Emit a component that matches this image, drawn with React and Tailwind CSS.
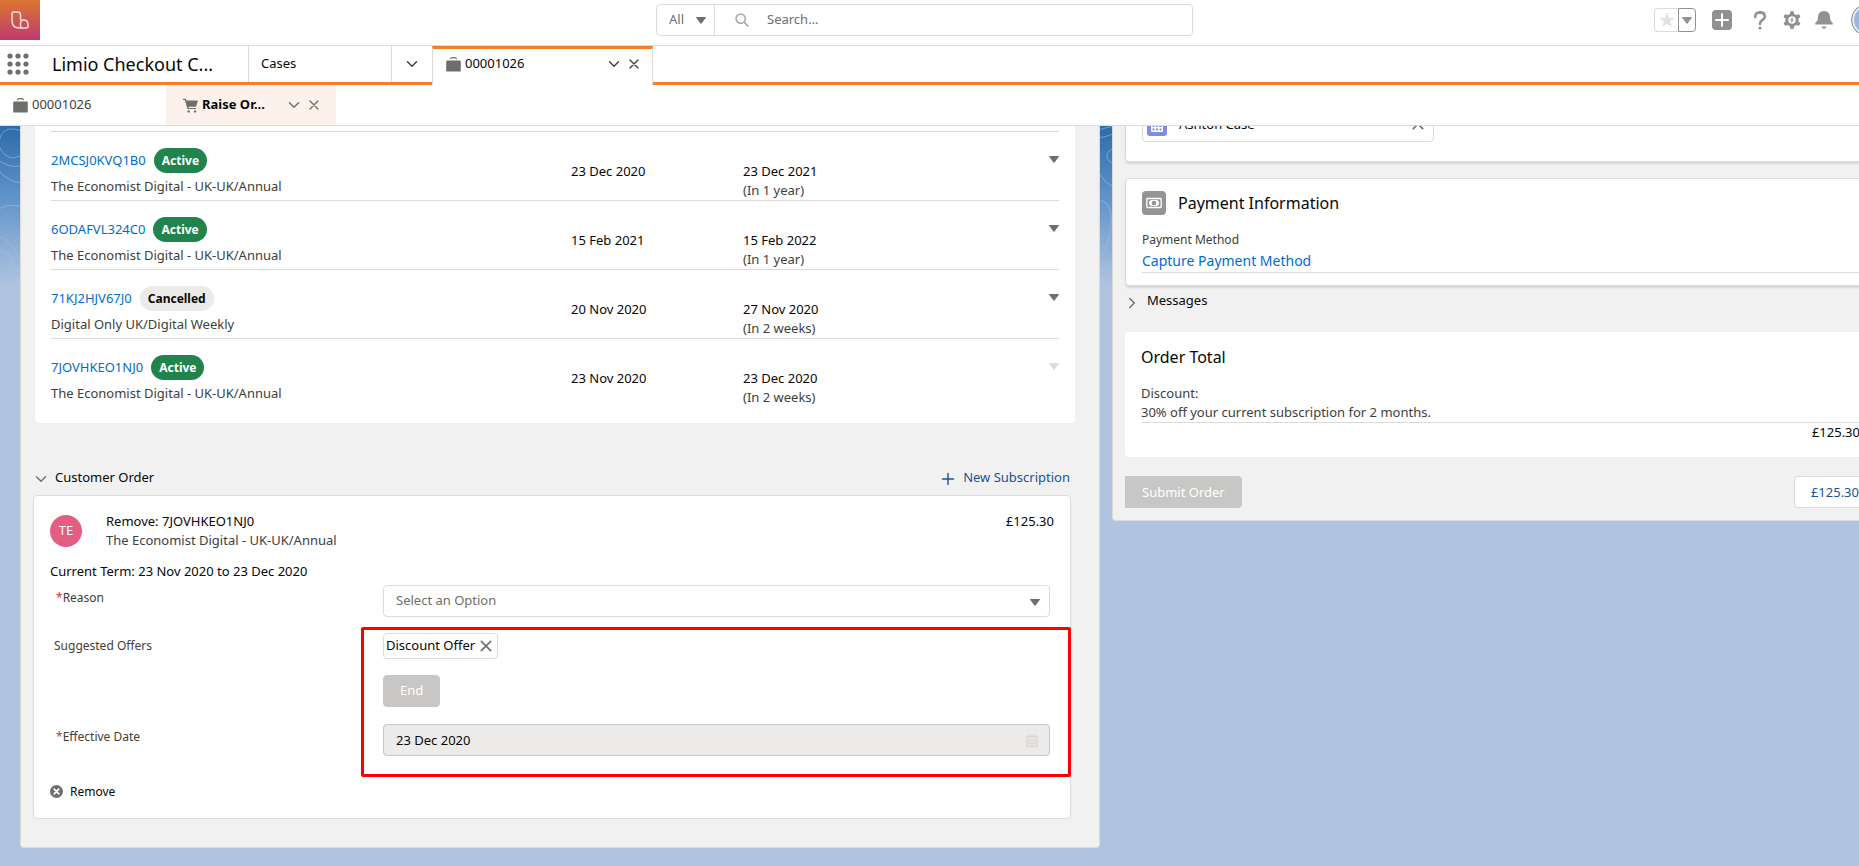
const SUBSCRIPTIONS = [
  { id: '2MCSJ0KVQ1B0', status: 'Active',    plan: 'The Economist Digital - UK-UK/Annual', start: '23 Dec 2020', end: '23 Dec 2021', term: '(In 1 year)',  locked: false },
  { id: '6ODAFVL324C0', status: 'Active',    plan: 'The Economist Digital - UK-UK/Annual', start: '15 Feb 2021', end: '15 Feb 2022', term: '(In 1 year)',  locked: false },
  { id: '71KJ2HJV67J0', status: 'Cancelled', plan: 'Digital Only UK/Digital Weekly',       start: '20 Nov 2020', end: '27 Nov 2020', term: '(In 2 weeks)', locked: false },
  { id: '7JOVHKEO1NJ0', status: 'Active',    plan: 'The Economist Digital - UK-UK/Annual', start: '23 Nov 2020', end: '23 Dec 2020', term: '(In 2 weeks)', locked: true },
]

const BADGES = {
  Active: 'bg-[#20844c] text-white',
  Cancelled: 'bg-[#ecebea] text-[#080707]',
}

function Triangle({ className = 'text-[#706e6b]' }) {
  return (
    <svg viewBox="0 0 10 7" className={`w-[10px] h-[7px] ${className}`} fill="currentColor">
      <path d="M0 0.6Q0 0 0.6 0H9.4Q10 0 10 0.6L5.5 6.6Q5 7.2 4.5 6.6Z" />
    </svg>
  )
}

function Chevron({ className = '' }) {
  return (
    <svg viewBox="0 0 12 12" className={`w-3 h-3 ${className}`} fill="none" stroke="currentColor" strokeWidth="1.4" strokeLinecap="round" strokeLinejoin="round">
      <path d="M1.5 3.8L6 8.3L10.5 3.8" />
    </svg>
  )
}

function Cross({ className = 'w-3 h-3' }) {
  return (
    <svg viewBox="0 0 12 12" className={className} fill="none" stroke="currentColor" strokeWidth="1.4" strokeLinecap="round">
      <path d="M2 2L10 10M10 2L2 10" />
    </svg>
  )
}

function Briefcase() {
  return (
    <svg viewBox="0 0 15 15" className="w-[15px] h-[15px] text-[#706e6b]" fill="currentColor">
      <path d="M4.7 2.2V1.8Q4.7 0.6 5.9 0.6H9.1Q10.3 0.6 10.3 1.8V2.2" fill="none" stroke="currentColor" strokeWidth="1.1" />
      <rect x="0.2" y="3.6" width="14.6" height="11" rx="1.2" />
    </svg>
  )
}

function Cart() {
  return (
    <svg viewBox="0 0 15 15" className="w-[15px] h-[15px] text-[#706e6b]" fill="currentColor">
      <path d="M0.5 0.8H2.3Q3 0.8 3.2 1.5L3.5 2.5H14.2Q14.9 2.5 14.7 3.2L13.2 8.2Q13 8.8 12.3 8.8H5.4L5.7 9.9H12.6Q13.2 9.9 13.2 10.5T12.6 11.1H5.1Q4.5 11.1 4.3 10.4L1.9 2.1H0.5Q0 2.1 0 1.5T0.5 0.8Z" />
      <circle cx="5.6" cy="13.4" r="1.2" />
      <circle cx="12" cy="13.4" r="1.2" />
    </svg>
  )
}

function Header() {
  return (
    <header className="grid grid-cols-[656fr_537fr_716fr] h-[46px] border-b border-[#dddbda] bg-white">
      <div>
        <svg viewBox="0 0 40 40" className="w-10 h-10" fill="none">
          <defs>
            <linearGradient id="logo" x1="0" y1="0" x2="0" y2="1">
              <stop offset="0" stopColor="#db7530" />
              <stop offset="1" stopColor="#bf3a70" />
            </linearGradient>
          </defs>
          <rect width="40" height="40" fill="url(#logo)" />
          <path d="M20.500 20V15Q20.500 12 17.500 12H13.500Q12 12 12 13.500V20.500Q12 28 19.500 28H26.500Q28 28 28 26.500V24.500Q28 20 23.500 20Q20.500 20 20.500 23V26Q20.500 28 22.500 28" stroke="#f8dde0" strokeWidth="1.5" />
        </svg>
      </div>

      <div className="flex h-8 mt-1 border border-[#dddbda] rounded text-[13px] text-[#706e6b]">
        <button className="flex items-center justify-between w-[58px] pl-3 pr-2 border-r border-[#dddbda]">
          All
          <Triangle />
        </button>
        <label className="flex flex-1 items-center pl-5 gap-[18px]">
          <svg viewBox="0 0 14 14" className="w-[14px] h-[14px] text-[#b0adab]" fill="none" stroke="currentColor" strokeWidth="1.7" strokeLinecap="round">
            <circle cx="5.7" cy="5.7" r="4.6" />
            <path d="M9.3 9.3L12.9 12.9" />
          </svg>
          <input type="search" aria-label="Search" placeholder="Search..." className="flex-1 outline-none placeholder:text-[#706e6b]" />
        </label>
      </div>

      <div className="flex items-center justify-end pr-[26px] h-10 text-[#919191]">
        <div className="flex h-6 w-[42px] mr-4">
          <button aria-label="Favorite" className="w-6 flex items-center justify-center border border-r-0 border-[#dddbda] rounded-l">
            <svg viewBox="0 0 16 16" className="w-4 h-4 text-[#e2e1e0]" fill="currentColor">
              <path d="M8 0.6L10 6H15.6L11.1 9.5L12.7 15L8 11.7L3.3 15L4.9 9.5L0.4 6H6Z" />
            </svg>
          </button>
          <button aria-label="Favorites list" className="w-[18px] flex items-center justify-center border border-[#919191] rounded-r">
            <Triangle className="text-[#919191]" />
          </button>
        </div>
        <button aria-label="Global actions" className="mr-[21px]">
          <svg viewBox="0 0 20 20" className="w-5 h-5">
            <rect width="20" height="20" rx="4" fill="#919191" />
            <path d="M10 4V16M4 10H16" stroke="white" strokeWidth="2" strokeLinecap="round" />
          </svg>
        </button>
        <button aria-label="Help" className="mr-4">
          <svg viewBox="0 0 14 20" className="w-[14px] h-5" fill="none" stroke="currentColor" strokeWidth="2.6">
            <path d="M2.2 7Q2 2.6 6.8 2.4Q11.8 2.4 11.8 6.4Q11.8 8.6 9.6 9.8Q7 11.2 7 14" strokeLinecap="round" />
            <circle cx="7" cy="18" r="1.6" fill="currentColor" stroke="none" />
          </svg>
        </button>
        <button aria-label="Setup" className="mr-[14px]">
          <svg viewBox="0 0 18 18" className="w-[18px] h-[18px]" fill="currentColor">
            <rect x="7" y="0" width="4" height="18" rx="1.6" />
            <rect x="7" y="0" width="4" height="18" rx="1.6" transform="rotate(60 9 9)" />
            <rect x="7" y="0" width="4" height="18" rx="1.6" transform="rotate(120 9 9)" />
            <circle cx="9" cy="9" r="6.6" />
            <circle cx="9" cy="9" r="3.7" fill="white" />
            <path d="M9.9 5.8L7 9.5H8.6L8 12.2L11 8.4H9.3Z" />
          </svg>
        </button>
        <button aria-label="Notifications" className="mr-[18px]">
          <svg viewBox="0 0 18 20" className="w-[18px] h-5" fill="currentColor">
            <path d="M9 1Q15 1.2 15 7.5Q15 11 17.3 12.6Q18 13.2 17.8 14.4H0.2Q0 13.2 0.7 12.6Q3 11 3 7.5Q3 1.2 9 1Z" />
            <path d="M6.6 16.4H11.4Q10.8 18.8 9 18.8T6.6 16.4Z" />
          </svg>
        </button>
        <button aria-label="Profile" className="shrink-0 w-8 h-8 rounded-full border border-[#919191] bg-[#9fb6da] shadow-[inset_0_0_0_2px_#e8eef8]" />
      </div>
    </header>
  )
}

function NavBar() {
  return (
    <nav className="flex h-[39px] bg-white border-b-[3px] border-[#f47f27] text-[13px] text-[#080707]">
      <button aria-label="App Launcher" className="pl-[7px] pr-[23px]">
        <svg viewBox="0 0 22 22" className="w-[22px] h-[22px]" fill="#706e6b">
          {[3, 11, 19].map(y => [3, 11, 19].map(x => <circle key={`${x}-${y}`} cx={x} cy={y} r="2.6" />))}
        </svg>
      </button>
      <div className="w-[196px] flex items-center text-lg">Limio Checkout C...</div>
      <a href="#cases" className="w-[143px] flex items-center pl-3 border-l border-[#dddbda]">Cases</a>
      <button aria-label="Cases list" className="w-[41px] flex items-center justify-center border-l border-[#dddbda]">
        <Chevron className="text-[#3e3e3c]" />
      </button>
      <div className="relative w-[221px] -mb-[3px] flex items-center pl-[13px] pb-[6px] bg-white border-x border-[#dddbda] border-t-[3px] border-t-[#f47f27]">
        <Briefcase />
        <a href="#case" className="ml-1 flex-1">00001026</a>
        <button aria-label="Tab actions" className="mr-2"><Chevron className="text-[#3e3e3c]" /></button>
        <button aria-label="Close tab" className="mr-3"><Cross className="w-3 h-3 text-[#3e3e3c]" /></button>
      </div>
    </nav>
  )
}

function SubTabs() {
  return (
    <nav className="flex h-[41px] bg-white border-b border-[#dddbda] text-[13px]">
      <a href="#case" className="w-[166px] flex items-center gap-1 pl-[13px] text-[#3e3e3c]">
        <Briefcase />
        00001026
      </a>
      <div className="w-[170px] flex items-center pl-[17px] bg-[#fdf1ec] text-[#080707]">
        <Cart />
        <a href="#raise-order" className="ml-1 flex-1 font-bold">Raise Or...</a>
        <button aria-label="Tab actions" className="mr-2"><Chevron className="text-[#706e6b]" /></button>
        <button aria-label="Close tab" className="mr-4"><Cross className="w-3 h-3 text-[#706e6b]" /></button>
      </div>
    </nav>
  )
}

// Contour lines that fade out behind the panels
function Contours() {
  return (
    <svg className="absolute inset-x-0 top-0 w-full h-40" fill="none" stroke="#a3c4e6" strokeOpacity="0.55">
      <path d="M-1 20Q-1 4 10 3Q22 3 24 8M-1 20Q4 32 14 32Q20 31 24 26" />
      <path d="M-2 34Q8 42 22 40M-2 44Q8 56 22 57" />
      <path d="M-2 84Q4 78 22 80M-2 110Q14 114 22 140" />
      <circle cx="-3" cy="138" r="15" />
      <path d="M1098 4Q1106 2 1113 0M1098 12Q1106 11 1113 8" />
      <circle cx="1114" cy="30" r="7" />
      <path d="M1098 46Q1104 56 1114 62M1098 74Q1118 76 1108 116Q1104 128 1098 132M1098 146L1114 134M1098 156L1114 142" />
    </svg>
  )
}

function SubscriptionTable() {
  return (
    <section className="bg-white rounded-b ml-[14px] mr-6 px-4 pt-[5px] pb-[15px]">
      <table className="w-full table-fixed border-t border-[#dddbda] text-left align-top">
        <colgroup>
          <col className="w-[520px]" />
          <col className="w-[172px]" />
          <col />
          <col className="w-8" />
        </colgroup>
        <tbody>
          {SUBSCRIPTIONS.map(s => (
            <tr key={s.id} className="h-[69px] border-b border-[#dddbda] last:border-b-0 align-top">
              <td className="pt-4">
                <div className="flex items-center gap-2 h-[25px]">
                  <a href={`#${s.id}`} className="text-[#006dcc]">{s.id}</a>
                  <span className={`h-[25px] px-2 rounded-full flex items-center text-xs font-bold ${BADGES[s.status]}`}>{s.status}</span>
                </div>
                <div className="mt-1 text-[#3e3e3c]">{s.plan}</div>
              </td>
              <td className="pt-[30px]">{s.start}</td>
              <td className="pt-[30px]">
                {s.end}
                <div className="text-[#3e3e3c]">{s.term}</div>
              </td>
              <td className="pt-6">
                <button aria-label={`Actions for ${s.id}`} disabled={s.locked} className="block ml-auto">
                  <Triangle className={s.locked ? 'text-[#dddbda]' : 'text-[#706e6b]'} />
                </button>
              </td>
            </tr>
          ))}
        </tbody>
      </table>
    </section>
  )
}

function OrderLine() {
  return (
    <section className="relative bg-white border border-[#dddbda] rounded mt-2 ml-3 mr-7 px-4 pt-4 pb-[18px]">
      <div className="flex pt-[3px]">
        <div className="w-8 h-8 rounded-full bg-[#e25d81] text-white flex items-center justify-center">TE</div>
        <div className="ml-6 -mt-[3px] flex-1">
          Remove: 7JOVHKEO1NJ0
          <div className="text-[#3e3e3c]">The Economist Digital - UK-UK/Annual</div>
        </div>
        <div className="-mt-[3px]">£125.30</div>
      </div>
      <div className="mt-3">Current Term: 23 Nov 2020 to 23 Dec 2020</div>

      <div className="grid grid-cols-[333px_1fr] mt-1 pr-1 text-xs text-[#3e3e3c]">
        <label htmlFor="reason" className="pl-[6px] pt-[5px]"><span className="text-[#c23934]">*</span>Reason</label>
        <div className="relative h-12">
          <select id="reason" className="appearance-none w-full h-8 px-3 border border-[#dddbda] rounded bg-white text-[13px] text-[#706e6b]">
            <option>Select an Option</option>
          </select>
          <Triangle className="text-[#706e6b] absolute right-[10px] top-[14px]" />
        </div>

        <div className="pl-1 pt-[5px]">Suggested Offers</div>
        <div className="h-[91px]">
          <div className="inline-flex items-center gap-1 h-[26px] pl-[2px] pr-1 border border-[#dddbda] rounded text-[13px] text-[#080707]">
            Discount Offer
            <button aria-label="Remove offer"><Cross className="w-[14px] h-[14px] text-[#706e6b]" /></button>
          </div>
          <button disabled className="block mt-4 h-8 px-4 rounded border border-[#c9c7c5] bg-[#c9c7c5] text-white text-[13px]">End</button>
        </div>

        <label htmlFor="effective-date" className="pl-[6px] pt-[5px]"><span className="text-[#c23934]">*</span>Effective Date</label>
        <div className="relative">
          <input id="effective-date" disabled defaultValue="23 Dec 2020" className="w-full h-8 px-3 border border-[#c9c7c5] rounded bg-[#ecebea] text-[13px] text-[#080707]" />
          <svg viewBox="0 0 12 14" className="absolute right-3 top-[10px] w-3 h-[14px] text-[#dddbda]" fill="currentColor">
            <path d="M2.5 0.5H4V1.6H8V0.5H9.5V1.6H11Q12 1.6 12 2.6V4H0V2.6Q0 1.6 1 1.6H2.5Z" />
            <path d="M0 5H12V12.4Q12 13.4 11 13.4H1Q0 13.4 0 12.4Z" />
            <path d="M2.2 6.8h1.8v1.8H2.2zM5.1 6.8h1.8v1.8H5.1zM8 6.8h1.8v1.8H8zM2.2 9.9h1.8v1.8H2.2zM5.1 9.9h1.8v1.8H5.1zM8 9.9h1.8v1.8H8z" fill="#ecebea" />
          </svg>
        </div>
      </div>

      <button className="flex items-center gap-[7px] mt-7 text-xs">
        <svg viewBox="0 0 13 13" className="w-[13px] h-[13px]">
          <circle cx="6.5" cy="6.5" r="6.5" fill="#706e6b" />
          <path d="M4.2 4.2L8.8 8.8M8.8 4.2L4.2 8.8" stroke="white" strokeWidth="1.7" strokeLinecap="round" />
        </svg>
        Remove
      </button>

      {/* Highlight around the offer fields */}
      <div className="absolute left-[327px] -right-px top-[131px] h-[150px] border-[3px] border-[#ff0000] rounded-[2px] pointer-events-none" />
    </section>
  )
}

function OrderSummary() {
  return (
    <aside className="self-start bg-[#f1f1f1] border border-t-0 border-[#dddbda] rounded-b px-3 pb-3">
      <section className="-mt-[17px] bg-white border border-[#dddbda] rounded shadow-[0_2px_2px_rgba(0,0,0,0.1)] px-4 pb-[19px]">
        <div className="flex items-center w-[292px] h-8 border border-[#dddbda] rounded px-1">
          <svg viewBox="0 0 20 20" className="w-5 h-5">
            <rect width="20" height="20" rx="3" fill="#7f8de1" />
            <rect x="4" y="4" width="12" height="12" rx="1" fill="white" />
            <path d="M5.5 12.500h2v2h-2zM9 12.500h2v2H9zM12.500 12.500h2v2h-2zM5.500 9h2v2h-2zM9 9h2v2H9zM12.500 9h2v2h-2z" fill="#7f8de1" />
          </svg>
          <span className="ml-3 pb-1 flex-1">Ashton Case</span>
          <button aria-label="Clear account" className="mr-1 pb-1"><Cross className="w-[14px] h-[14px] text-[#706e6b]" /></button>
        </div>
      </section>

      <section className="mt-4 bg-white border border-[#dddbda] rounded shadow-[0_2px_2px_rgba(0,0,0,0.1)] px-4 pt-3 pb-3">
        <div className="flex items-center gap-3">
          <svg viewBox="0 0 24 24" className="w-6 h-6">
            <rect width="24" height="24" rx="4" fill="#969492" />
            <rect x="4.800" y="7.500" width="14.400" height="9" rx="0.800" fill="none" stroke="white" strokeWidth="1.300" />
            <path d="M7 10.500Q8.500 10.300 8.700 9H15.300Q15.500 10.300 17 10.500V13.500Q15.500 13.700 15.300 15H8.700Q8.500 13.700 7 13.500Z" fill="white" />
            <circle cx="12" cy="12" r="2.300" fill="#969492" />
          </svg>
          <h2 className="text-base">Payment Information</h2>
        </div>
        <div className="mt-[17px] text-xs text-[#3e3e3c]">Payment Method</div>
        <div className="mt-[3px] pb-px border-b border-[#dddbda]">
          <a href="#payment" className="text-sm text-[#006dcc]">Capture Payment Method</a>
        </div>
      </section>

      <button className="flex items-center gap-[9px] mt-[5px] ml-px">
        <Chevron className="-rotate-90 mt-1 text-[#706e6b]" />
        Messages
      </button>

      <section className="mt-[22px] h-[125px] bg-white rounded px-4 pt-[13px]">
        <h2 className="text-base">Order Total</h2>
        <div className="mt-[15px] border-b border-[#dddbda] text-[#3e3e3c]">
          Discount:
          <div>30% off your current subscription for 2 months.</div>
        </div>
        <div className="text-right">£125.30</div>
      </section>

      <div className="flex justify-between mt-[19px]">
        <button disabled className="h-8 px-4 rounded-r border border-[#c9c7c5] bg-[#c9c7c5] text-white">Submit Order</button>
        <button className="h-8 px-4 rounded border border-[#dddbda] bg-white text-[#1b5297]">£125.30</button>
      </div>
    </aside>
  )
}

export default function App() {
  return (
    <div className="overflow-hidden bg-[#b0c4df] font-['Noto_Sans',sans-serif]">
      <div className="w-[calc(100%+50px)] min-h-screen flex flex-col">
        <Header />
        <NavBar />
        <SubTabs />
        <main className="relative flex-1 overflow-hidden bg-[linear-gradient(#2c6ca9,#5f92c8_70px,#b0c4df_160px)] text-[13px] leading-[19px] text-[#080707]">
          <Contours />
          <div className="relative grid grid-cols-[1080fr_777fr] gap-3 px-5 pb-5">
            <div className="bg-[#f1f1f1] border border-t-0 border-[#dddbda] rounded-b pb-7">
              <SubscriptionTable />
              <div className="flex items-center justify-between mt-[45px] ml-[14px] mr-[29px]">
                <button className="flex items-center gap-2">
                  <Chevron className="mt-1 text-[#706e6b]" />
                  Customer Order
                </button>
                <button className="flex items-center gap-2 text-[#1b5297]">
                  <svg viewBox="0 0 14 14" className="w-[14px] h-[14px] mt-1" stroke="currentColor" strokeWidth="1.4" strokeLinecap="round">
                    <path d="M7 1.500V12.500M1.500 7H12.500" />
                  </svg>
                  New Subscription
                </button>
              </div>
              <OrderLine />
            </div>
            <OrderSummary />
          </div>
        </main>
      </div>
    </div>
  )
}
